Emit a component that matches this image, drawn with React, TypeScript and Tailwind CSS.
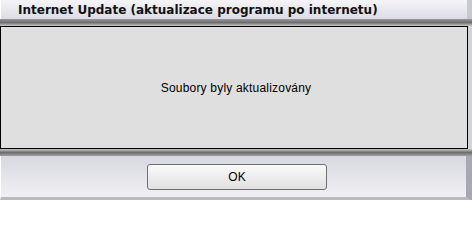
export default function App() {
  return (
    <div
      className="w-[472px] h-[200px] flex flex-col bg-[#d4d4dc] overflow-hidden"
      style={{ fontFamily: '"Liberation Sans", Arial, sans-serif' }}
    >
      {/* title bar */}
      <div className="h-[19px] flex items-center pl-[17px] bg-gradient-to-b from-[#f4f4f8] to-[#dcdce4] border-l border-white border-r-[5px] border-r-[#c8c8d0]">
        <span
          className="text-[12px] font-bold text-[#111] leading-none"
          style={{ fontFamily: '"DejaVu Sans", sans-serif' }}
        >
          Internet Update (aktualizace programu po internetu)
        </span>
      </div>
      {/* separator */}
      <div className="h-[7px] bg-gradient-to-b from-[#9a9a9a] via-[#6e6e6e] to-[#c8c8c8]" />
      {/* message panel */}
      <div className="h-[123px] mr-[4px] flex items-center justify-center pl-[4px] bg-[#dfdfdf] border border-black">
        <span className="text-[12px] text-black tracking-[0.2px]">Soubory byly aktualizovány</span>
      </div>
      {/* separator */}
      <div className="h-[7px] bg-gradient-to-b from-[#c8c8c8] via-[#6e6e6e] to-[#a0a0a0]" />
      {/* button bar */}
      <div className="flex-1 flex justify-start pl-[146px] pt-[8px] bg-gradient-to-b from-[#d8d8e0] to-[#f0f0f4] border-l border-white border-r-[6px] border-r-[#a8a8b0] border-b-[3px] border-b-[#b8b8c0]">
        <button className="w-[180px] h-[26px] rounded-[3px] border border-[#707070] bg-gradient-to-b from-[#fafafa] to-[#e0e0e0] text-[12px] text-black">
          OK
        </button>
      </div>
    </div>
  );
}
